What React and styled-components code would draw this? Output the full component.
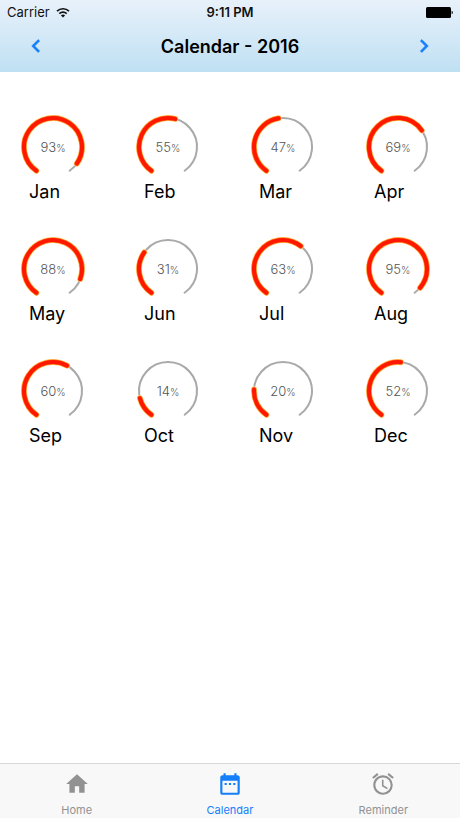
import styled, { createGlobalStyle } from "styled-components";
import {
  MdAccessAlarm,
  MdChevronLeft,
  MdChevronRight,
  MdDateRange,
  MdHome
} from "react-icons/md";

const months = [
  { name: "Jan", value: 93 },
  { name: "Feb", value: 55 },
  { name: "Mar", value: 47 },
  { name: "Apr", value: 69 },
  { name: "May", value: 88 },
  { name: "Jun", value: 31 },
  { name: "Jul", value: 63 },
  { name: "Aug", value: 95 },
  { name: "Sep", value: 60 },
  { name: "Oct", value: 14 },
  { name: "Nov", value: 20 },
  { name: "Dec", value: 52 }
];

const tabs = [
  { label: "Home", icon: MdHome },
  { label: "Calendar", icon: MdDateRange, active: true },
  { label: "Reminder", icon: MdAccessAlarm }
];

// Gauge: 290 degree arc, open at the bottom
const CENTER = 32;
const RADIUS = 29;
const START = 215;
const SWEEP = 290;

const pointAt = (angle) => {
  const rad = (angle * Math.PI) / 180;
  return `${CENTER + RADIUS * Math.sin(rad)} ${CENTER - RADIUS * Math.cos(rad)}`;
};

const arc = (value) => {
  const sweep = (SWEEP * value) / 100;
  const large = sweep > 180 ? 1 : 0;
  return `M${pointAt(START)} A${RADIUS} ${RADIUS} 0 ${large} 1 ${pointAt(START + sweep)}`;
};

const Gauge = ({ value }) => {
  return (
    <GaugeWrapper>
      <svg width="64" height="64" viewBox="0 0 64 64" aria-hidden="true">
        <Arc d={arc(100)} stroke="#a9a9a9" $width={2} />
        <Arc d={arc(value)} stroke="#ffd27a" $width={6} />
        <Arc d={arc(value)} stroke="#ff7a1c" $width={5} />
        <Arc d={arc(value)} stroke="#ff1800" $width={4} />
      </svg>
      <GaugeValue>
        {value}
        <small>%</small>
      </GaugeValue>
    </GaugeWrapper>
  );
};

const StatusBar = () => {
  return (
    <Status>
      <Carrier>
        Carrier
        <svg width="14" height="11" viewBox="0 0 14 11" fill="none" stroke="#111" aria-hidden="true">
          <path d="M1 4.2a8.6 8.6 0 0 1 12 0" strokeWidth="1.7" />
          <path d="M3.3 6.6a5.3 5.3 0 0 1 7.4 0" strokeWidth="1.6" />
          <path d="M7 10.6 4.9 8.5a3 3 0 0 1 4.2 0z" fill="#111" stroke="none" />
        </svg>
      </Carrier>
      <Clock>9:11 PM</Clock>
      <Battery>
        <svg width="27" height="11" viewBox="0 0 27 11" aria-hidden="true">
          <rect width="25" height="11" rx="1.5" fill="#000" />
          <path d="M25.6 3.7c1.6.4 1.6 3.2 0 3.6z" fill="#000" />
        </svg>
      </Battery>
    </Status>
  );
};

const App = () => {
  return (
    <Page>
      <GlobalStyle />
      <Header>
        <StatusBar />
        <NavBar>
          <NavButton type="button" aria-label="Previous year">
            <MdChevronLeft />
          </NavButton>
          <Title>Calendar - 2016</Title>
          <NavButton type="button" aria-label="Next year">
            <MdChevronRight />
          </NavButton>
        </NavBar>
      </Header>
      <Months>
        {months.map(({ name, value }) => (
          <Month key={name}>
            <Gauge value={value} />
            <MonthName>{name}</MonthName>
          </Month>
        ))}
      </Months>
      <TabBar>
        {tabs.map(({ label, icon: TabIcon, active }) => (
          <Tab key={label} type="button" $active={active}>
            <TabIcon />
            {label}
          </Tab>
        ))}
      </TabBar>
    </Page>
  );
};

export default App;

const GlobalStyle = createGlobalStyle`
  * {
    box-sizing: border-box;
  }
  body {
    margin: 0;
    background-color: #fff;
    font-family: Inter, "Liberation Sans", sans-serif;
  }
`;

const Page = styled.div`
  display: flex;
  flex-direction: column;
  min-height: 100vh;
`;

const Header = styled.header`
  padding-bottom: 2px;
  background: linear-gradient(#e8f1fa, #bfe0f3);
`;

const Status = styled.div`
  display: grid;
  grid-template-columns: 1fr auto 1fr;
  align-items: center;
  height: 24px;
  padding: 0 7px;
  font-size: 13px;
  color: #111;
`;

const Carrier = styled.span`
  display: flex;
  align-items: center;
  gap: 6px;
`;

const Clock = styled.span`
  font-weight: 600;
`;

const Battery = styled.span`
  display: flex;
  justify-content: flex-end;
`;

const NavBar = styled.nav`
  display: flex;
  align-items: center;
  justify-content: space-between;
  height: 46px;
  padding: 0 23px;
`;

const NavButton = styled.button`
  display: flex;
  padding: 0 0 2px;
  border: 0;
  background: none;
  color: #147efb;
  font-size: 26px;
  cursor: pointer;
  path:not([fill]) {
    stroke: currentColor;
    stroke-width: 0.5;
  }
`;

const Title = styled.h1`
  margin: 0;
  font-size: 18px;
  line-height: 24px;
  font-weight: 600;
  color: #000;
`;

const Months = styled.main`
  display: grid;
  grid-template-columns: repeat(4, 1fr);
  grid-auto-rows: 122px;
  flex: 1;
  padding-top: 43px;
`;

const Month = styled.section`
  padding-left: 21px;
`;

const GaugeWrapper = styled.div`
  position: relative;
  width: 64px;
  height: 64px;
`;

const Arc = styled.path`
  fill: none;
  stroke-width: ${({ $width }) => $width}px;
  stroke-linecap: round;
`;

const GaugeValue = styled.span`
  position: absolute;
  inset: 0;
  display: flex;
  align-items: baseline;
  justify-content: center;
  line-height: 64px;
  font-size: 13px;
  font-weight: 300;
  color: #555;
  small {
    font-size: 10px;
  }
`;

const MonthName = styled.h2`
  margin: 0;
  padding-left: 8px;
  font-size: 18px;
  line-height: 26px;
  font-weight: 400;
  color: #000;
`;

const TabBar = styled.footer`
  display: grid;
  grid-template-columns: repeat(3, 1fr);
  height: 55px;
  border-top: 1px solid #d8d8d8;
  background-color: #f8f8f8;
`;

const Tab = styled.button`
  display: flex;
  flex-direction: column;
  align-items: center;
  gap: 6px;
  padding: 7px 0 0;
  border: 0;
  background: none;
  font-family: inherit;
  font-size: 11px;
  line-height: 14px;
  color: ${({ $active }) => ($active ? "#147efb" : "#929292")};
  cursor: pointer;
  svg {
    width: 26px;
    height: 26px;
  }
`;
